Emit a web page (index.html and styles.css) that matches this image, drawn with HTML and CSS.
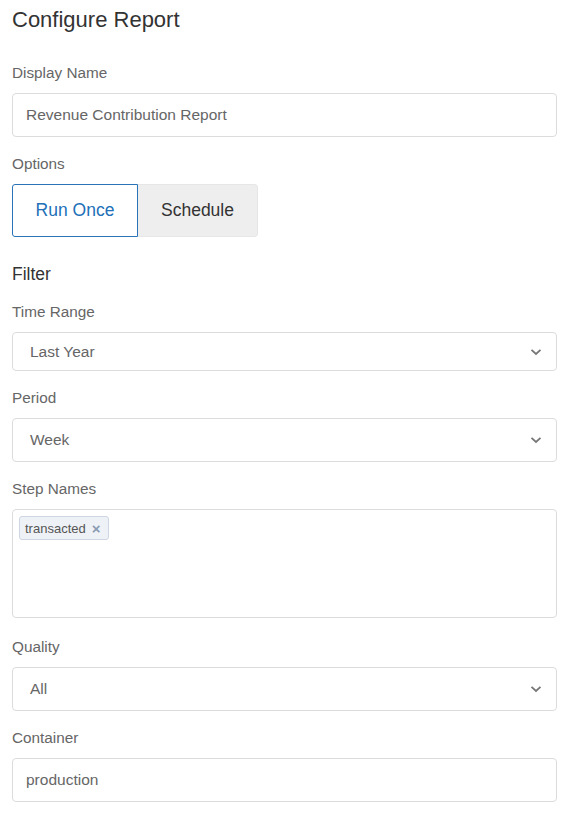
FILE: index.html
```html
<!DOCTYPE html>
<html lang="en">
<head>
<meta charset="utf-8">
<title>Configure Report</title>
<link rel="stylesheet" href="styles.css">
</head>
<body>
<main class="page">
  <h1 class="title">Configure Report</h1>

  <div class="group">
    <div class="label">Display Name</div>
    <div class="field">Revenue Contribution Report</div>
  </div>

  <div class="group">
    <div class="label">Options</div>
    <div class="toggle">
      <div class="toggle-btn active">Run Once</div>
      <div class="toggle-btn">Schedule</div>
    </div>
  </div>

  <h2 class="section">Filter</h2>

  <div class="group">
    <div class="label">Time Range</div>
    <div class="field select short">
      <span>Last Year</span>
      <svg class="chev" width="12" height="8" viewBox="0 0 12 8"><path d="M1.5 1.8 L6 6 L10.5 1.8" fill="none" stroke="#777" stroke-width="1.8"/></svg>
    </div>
  </div>

  <div class="group">
    <div class="label">Period</div>
    <div class="field select">
      <span>Week</span>
      <svg class="chev" width="12" height="8" viewBox="0 0 12 8"><path d="M1.5 1.8 L6 6 L10.5 1.8" fill="none" stroke="#777" stroke-width="1.8"/></svg>
    </div>
  </div>

  <div class="group group-tall">
    <div class="label">Step Names</div>
    <div class="multi">
      <span class="tag">transacted <span class="tag-x">×</span></span>
    </div>
  </div>

  <div class="group">
    <div class="label">Quality</div>
    <div class="field select">
      <span>All</span>
      <svg class="chev" width="12" height="8" viewBox="0 0 12 8"><path d="M1.5 1.8 L6 6 L10.5 1.8" fill="none" stroke="#777" stroke-width="1.8"/></svg>
    </div>
  </div>

  <div class="group">
    <div class="label">Container</div>
    <div class="field">production</div>
  </div>
</main>
</body>
</html>
```

FILE: styles.css
```css
html, body {
  margin: 0;
  padding: 0;
  background: #ffffff;
}

body {
  font-family: "Liberation Sans", Arial, Helvetica, sans-serif;
  color: #333;
}

.page {
  padding: 7px 24px 0 12px;
}

.title {
  margin: 0 0 30px 0;
  font-size: 22px;
  line-height: 26px;
  font-weight: normal;
  color: #333;
}

.group {
  margin-bottom: 17px;
}

.group-tall {
  margin-bottom: 19px;
}

.label {
  font-size: 15.3px;
  line-height: 20px;
  color: #666;
  margin-bottom: 10px;
}

.field {
  box-sizing: border-box;
  height: 44px;
  border: 1px solid #dcdcdc;
  border-radius: 4px;
  padding: 0 14px 0 13px;
  display: flex;
  align-items: center;
  font-size: 15.5px;
  color: #666;
}

.select {
  padding-left: 17px;
  justify-content: space-between;
  padding-right: 14px;
}

.select.short {
  height: 39px;
}

.chev {
  display: block;
}

.toggle {
  display: flex;
}

.toggle-btn {
  box-sizing: border-box;
  width: 120px;
  height: 53px;
  display: flex;
  align-items: center;
  justify-content: center;
  font-size: 17.5px;
  color: #333;
  background: #eeeeee;
  border: 1px solid #e6e6e6;
  border-left: none;
  border-radius: 0 4px 4px 0;
}

.toggle-btn.active {
  width: 126px;
  background: #ffffff;
  color: #2170b8;
  border: 1px solid #2a73b8;
  border-radius: 3px 0 0 3px;
}

.section {
  margin: 26px 0 17px 0;
  font-size: 17.5px;
  line-height: 22px;
  font-weight: normal;
  color: #333;
}

.multi {
  box-sizing: border-box;
  height: 109px;
  border: 1px solid #dcdcdc;
  border-radius: 4px;
  padding: 6px 6px;
  display: flex;
  align-items: flex-start;
}

.tag {
  display: inline-flex;
  align-items: center;
  box-sizing: border-box;
  height: 24px;
  padding: 0 8px 0 5px;
  background: #eef2f7;
  border: 1px solid #cdd6e2;
  border-radius: 3px;
  font-size: 13px;
  color: #555;
}

.tag-x {
  margin-left: 6px;
  color: #8b9bb3;
  font-size: 15px;
  font-weight: bold;
}
```
